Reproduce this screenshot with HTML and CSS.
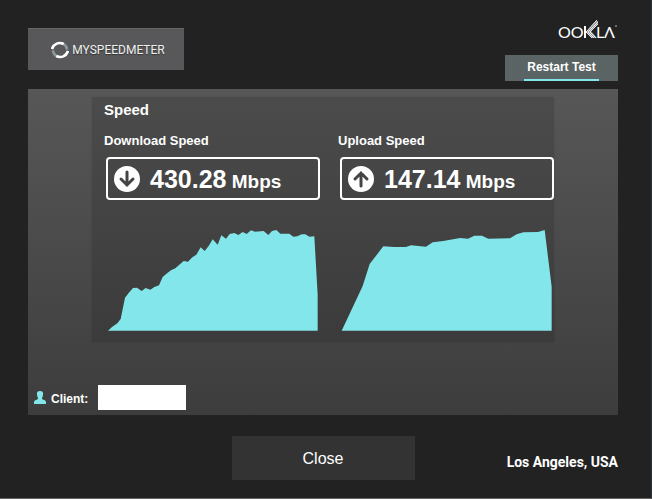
FILE: index.html
```html
<!DOCTYPE html>
<html lang="en">
<head>
    <meta charset="UTF-8">
    <meta name="viewport" content="width=device-width, initial-scale=1.0">
    <title>MySpeedMeter</title>
    <link rel="stylesheet" href="styles.css">
</head>
<body>

    <header>
        <div class="brand">
            <svg class="brand-ring" width="18" height="18" viewBox="0 0 54 54" fill="none" stroke-width="8">
                <path d="M28 6 A21 21 0 0 1 48 26" stroke="#8b989d" />
                <path d="M26 48 A21 21 0 0 1 6 28" stroke="#8b989d" />
                <path d="M3 24 C8 8 24 2 38 9" stroke="#ffffff" />
                <path d="M51 30 C46 46 30 52 16 45" stroke="#ffffff" />
            </svg>
            <span class="brand-name">MYSPEEDMETER</span>
        </div>
        <div class="tools">
            <svg class="ookla" width="60" height="26" viewBox="0 0 60 26" role="img" aria-label="Ookla">
                <text x="0" y="18">OO</text>
                <text x="38" y="18">L</text>
                <text x="46" y="18">Λ</text>
                <path d="M27 6 V18" stroke="#fff" stroke-width="2" />
                <path d="M28 12 L38 1 L40 1 V4 L33 11 L39 18 H34 Z" fill="#999" />
                <g fill="none" stroke="#eee" stroke-width="1">
                    <path d="M28 12 L39 0" />
                    <path d="M30 12 L40 2" />
                    <path d="M32 12 L40 4" />
                    <path d="M28 12 L34 18" />
                    <path d="M30 12 L36 18" />
                    <path d="M32 12 L38 18" />
                </g>
                <circle cx="58" cy="6" r="1" fill="#888" />
            </svg>
            <button type="button" class="restart-btn">Restart Test</button>
        </div>
    </header>

    <main class="panel">
        <section class="results">
            <h1>Speed</h1>
            <div class="columns">
                <div class="result">
                    <h2>Download Speed</h2>
                    <div class="value-box">
                        <svg width="26" height="26" viewBox="0 0 26 26">
                            <circle cx="13" cy="13" r="13" fill="#fff" />
                            <path d="M13 6 V19 M7 13 L13 19 L19 13" fill="none" stroke="#444" stroke-width="3" stroke-linecap="round" />
                        </svg>
                        <p><span class="number">430.28</span> Mbps</p>
                    </div>
                    <svg class="chart" viewBox="12 0 648 378">
                        <path d="M24 377 L36 366 L52 355 L62 342 L75 278 L86 264 L99 249 L111 248 L125 258 L137 249 L151 254 L163 246 L177 241 L188 216 L202 204 L213 196 L226 190 L251 168 L264 170 L277 157 L289 149 L302 127 L314 138 L326 123 L338 103 L353 119 L364 91 L378 101 L389 87 L403 84 L415 90 L428 81 L440 87 L453 76 L465 80 L491 78 L505 90 L516 78 L529 75 L541 86 L568 86 L580 95 L592 94 L605 88 L616 88 L628 95 L643 94 L653 270 V377 Z" />
                    </svg>
                </div>
                <div class="result">
                    <h2>Upload Speed</h2>
                    <div class="value-box">
                        <svg width="26" height="26" viewBox="0 0 26 26">
                            <circle cx="13" cy="13" r="13" fill="#fff" />
                            <path d="M13 20 V7 M7 13 L13 7 L19 13" fill="none" stroke="#444" stroke-width="3" stroke-linecap="round" />
                        </svg>
                        <p><span class="number">147.14</span> Mbps</p>
                    </div>
                    <svg class="chart" viewBox="24 0 648 378">
                        <path d="M35 377 L98 243 L119 177 L160 124 L192 126 L228 126 L243 121 L288 125 L308 112 L340 108 L390 99 L414 101 L433 92 L456 92 L475 101 L540 100 L560 88 L580 82 L624 81 L644 75 L665 245 V377 Z" />
                    </svg>
                </div>
            </div>
        </section>

        <div class="client">
            <svg width="12" height="13" viewBox="0 0 24 26">
                <path d="M12 0 C17 0 19 3 18 7 C18 11 16 13 16 15 C16 18 24 17 24 23 V26 H0 V23 C0 17 8 18 8 15 C8 13 6 11 6 7 C5 3 7 0 12 0 Z" fill="#82e6ea" />
            </svg>
            <label for="client">Client:</label>
            <input type="text" id="client">
        </div>
    </main>

    <footer>
        <button type="button" class="close-btn">Close</button>
        <span class="location">Los Angeles, USA</span>
    </footer>

</body>
</html>
```
FILE: styles.css
```css
/* General Styling */
* {
    box-sizing: border-box;
}

body {
    font-family: "Liberation Sans", Arial, sans-serif;
    background-color: #222;
    color: #fff;
    margin: 0;
    padding: 20px 33px 0 28px;
    min-height: 100vh;
    border-right: 1px solid #2b3538;
    border-bottom: 1px solid #666;
}

h1, h2, p {
    margin: 0;
}

button {
    font-family: inherit;
    color: #fff;
    border: none;
    cursor: pointer;
}

/* Header */
header {
    display: flex;
    justify-content: space-between;
    align-items: flex-start;
}

.brand {
    display: flex;
    align-items: center;
    justify-content: center;
    gap: 3px;
    width: 156px;
    height: 42px;
    margin-top: 8px;
    padding-left: 4px;
    background-color: #58585a;
    border-top: 1px solid #666;
}

.brand-name {
    font-family: Roboto, sans-serif;
    font-size: 12px;
    color: #f0f0f0;
    text-shadow: 0 1px 1px #333;
}

.tools {
    display: flex;
    flex-direction: column;
    align-items: flex-end;
}

.ookla {
    display: block;
    margin-bottom: 9px;
    overflow: visible;
}

.ookla text {
    font-family: Lato, sans-serif;
    font-size: 16px;
    fill: #fff;
}

.restart-btn {
    width: 113px;
    height: 26px;
    padding: 0 0 2px;
    background: linear-gradient(#82e6ea, #82e6ea) center bottom / 75px 2px no-repeat, #5a6464;
    font-size: 12px;
    font-weight: bold;
}

/* Results panel */
.panel {
    margin-top: 8px;
    padding-top: 8px;
    background: linear-gradient(#575757, #3d3d3d);
}

.results {
    margin: 0 64px;
    padding: 4px 0 11px 12px;
    background: linear-gradient(#4b4b4b, #3b3b3b);
    box-shadow: 0 0 2px rgba(0, 0, 0, 0.1);
}

h1 {
    font-size: 15px;
    line-height: 18px;
}

.columns {
    display: grid;
    grid-template-columns: 1fr 1fr;
    gap: 18px;
    margin-top: 12px;
}

h2 {
    font-size: 13px;
    line-height: 20px;
}

.value-box {
    display: flex;
    align-items: center;
    gap: 10px;
    height: 43px;
    margin: 6px 0 5px 2px;
    padding-left: 6px;
    border: 2px solid #fff;
    border-radius: 4px;
    font-size: 19px;
    font-weight: bold;
}

.value-box p {
    padding-top: 2px;
}

.number {
    font-size: 25px;
}

.chart {
    display: block;
    width: 100%;
    fill: #82e6ea;
}

/* Client row */
.client {
    display: flex;
    align-items: center;
    padding: 43px 6px 5px;
}

.client label {
    margin: 0 10px 0 5px;
    padding-top: 2px;
    font-size: 12px;
    font-weight: bold;
}

.client input {
    width: 88px;
    height: 25px;
    border: none;
    background-color: #fff;
}

/* Footer */
footer {
    display: grid;
    grid-template-columns: 1fr 183px 1fr;
    align-items: center;
    margin-top: 21px;
}

.close-btn {
    grid-column: 2;
    height: 44px;
    padding-top: 3px;
    background-color: #333;
    font-size: 16px;
}

.location {
    justify-self: end;
    padding-top: 8px;
    font-family: Roboto, sans-serif;
    font-size: 14px;
    font-weight: bold;
}
```
